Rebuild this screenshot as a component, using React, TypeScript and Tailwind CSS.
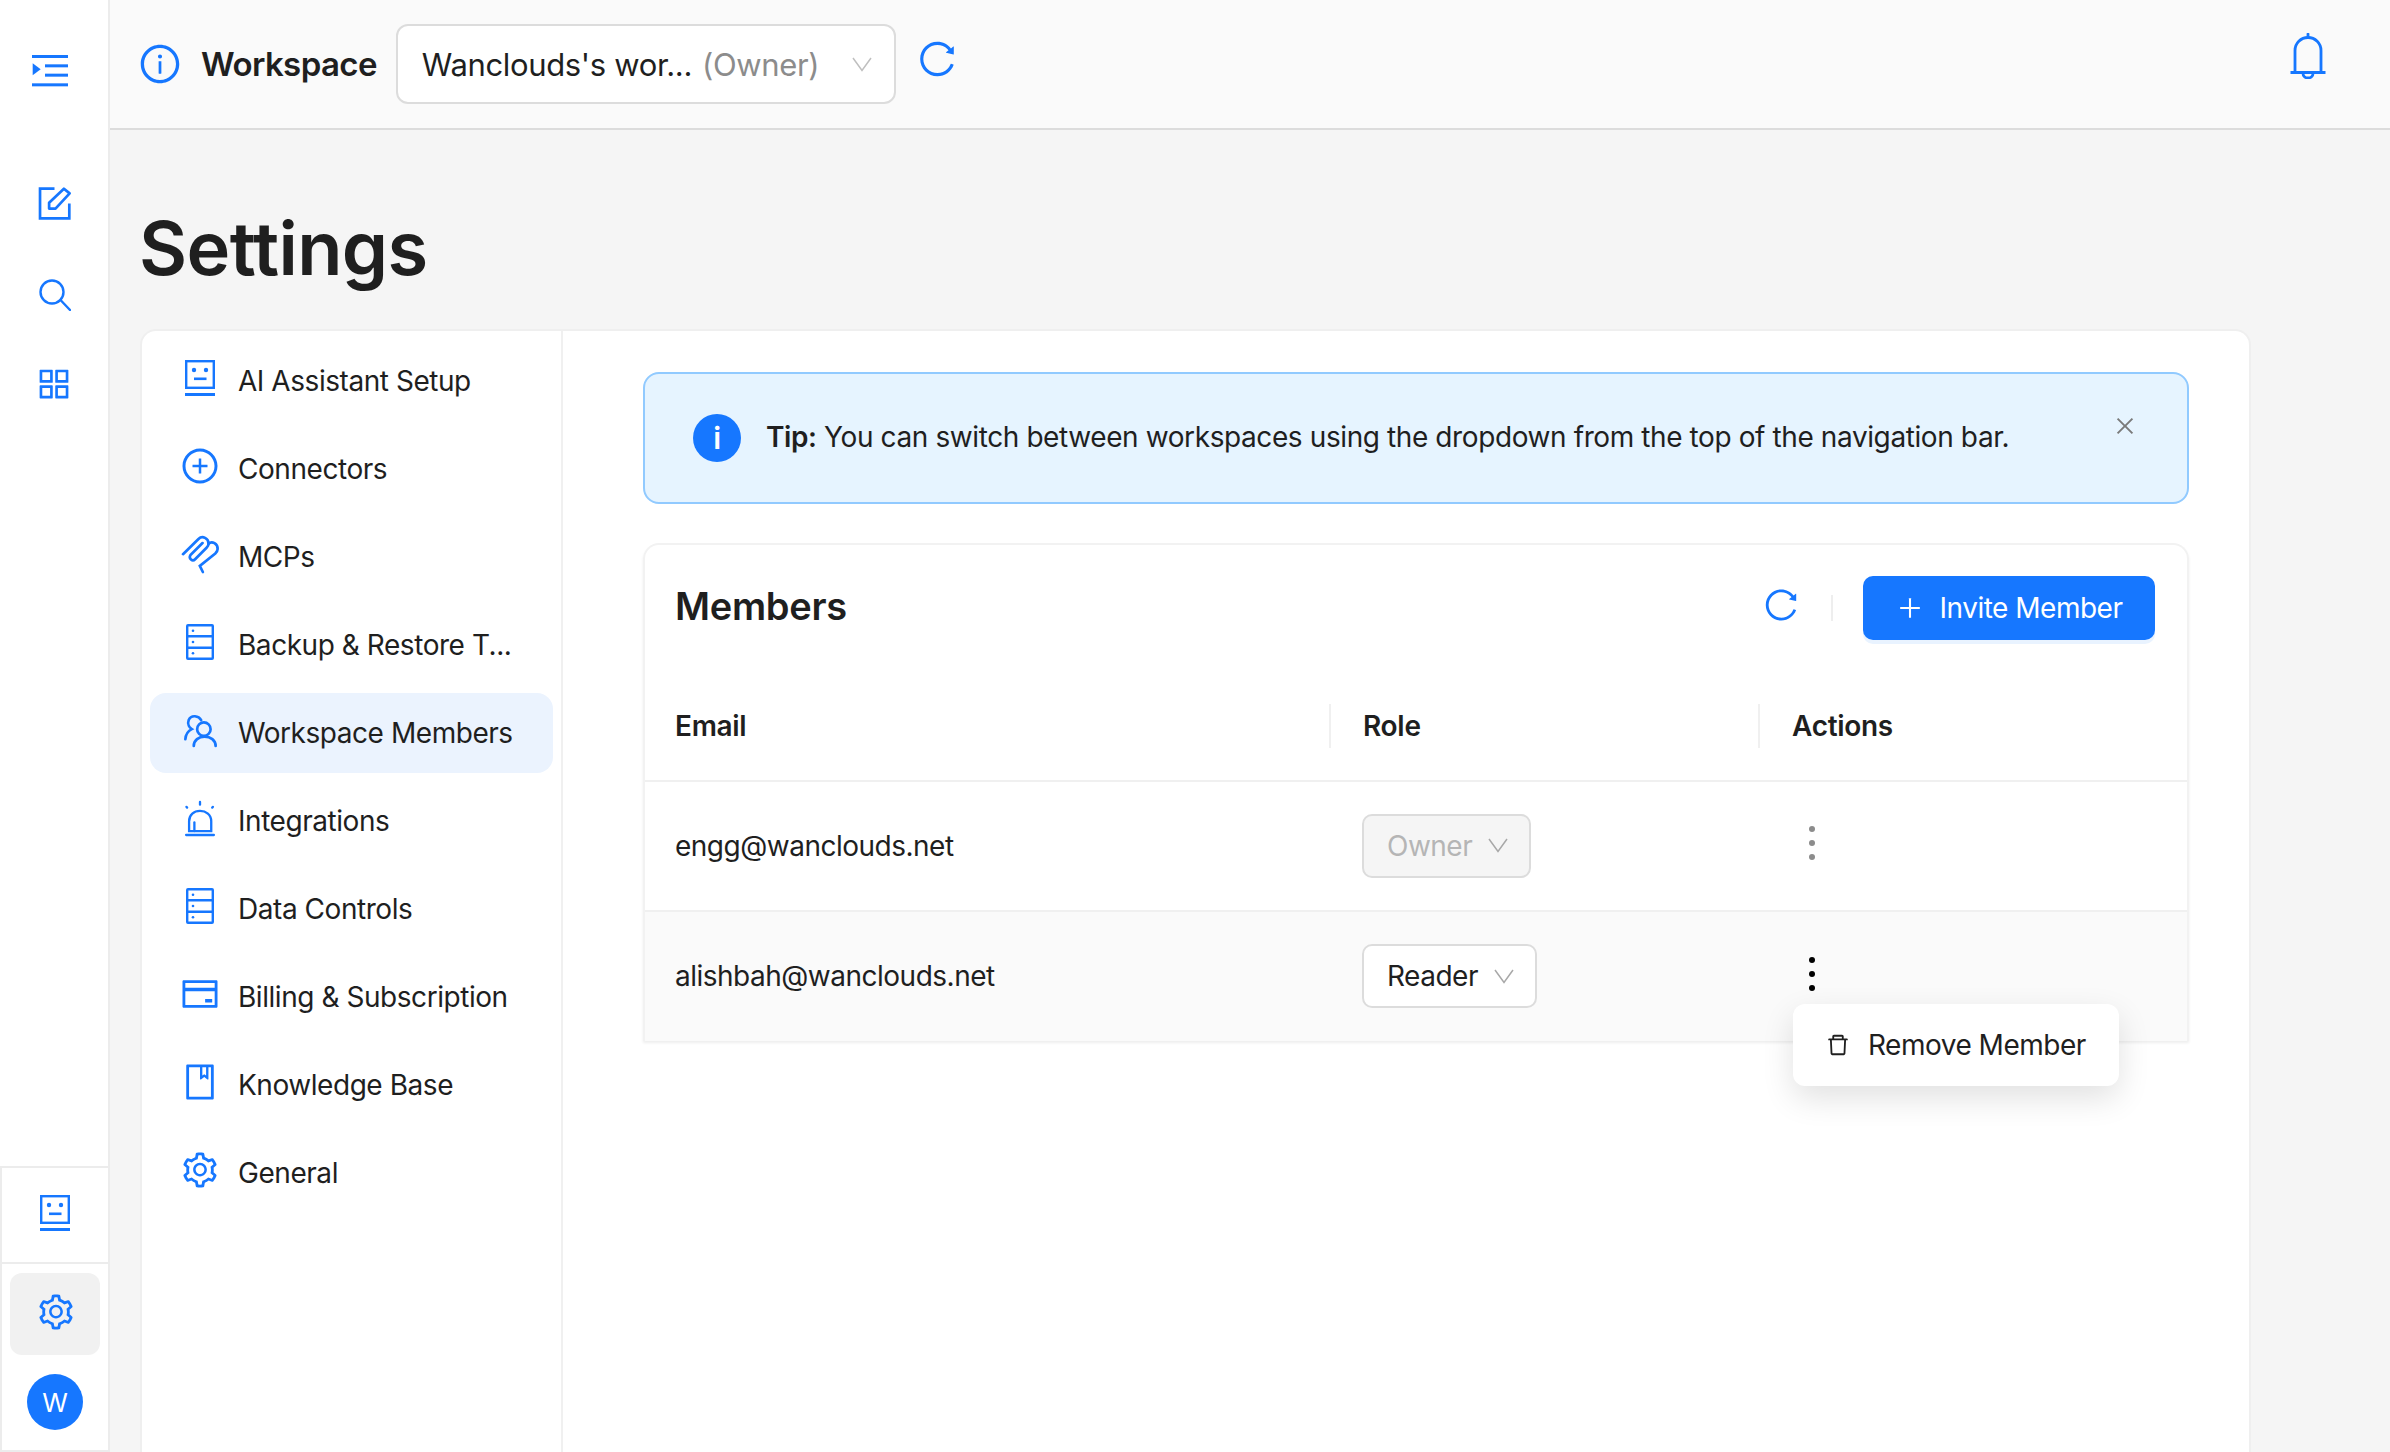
import React from 'react';
import {
  AiOutlineAppstore,
  AiOutlineBook,
  AiOutlineClose,
  AiOutlineCreditCard,
  AiOutlineDelete,
  AiOutlineInfoCircle,
  AiOutlinePlus,
  AiOutlinePlusCircle,
  AiOutlineReload,
  AiOutlineSetting,
} from 'react-icons/ai';

type IconProps = { className?: string };

const BotIcon: React.FC<IconProps> = ({ className }) => (
  <svg viewBox="0 0 30 36" fill="none" className={className}>
    <rect x="1.2" y="1.2" width="27.6" height="26.6" stroke="currentColor" strokeWidth="2.4" />
    <circle cx="9" cy="10" r="2.2" fill="currentColor" />
    <circle cx="21" cy="10" r="2.2" fill="currentColor" />
    <rect x="9" y="17.5" width="12.5" height="2.6" fill="currentColor" />
    <rect x="0" y="33" width="30" height="3" fill="currentColor" />
  </svg>
);

const MenuIcon: React.FC<IconProps> = ({ className }) => (
  <svg viewBox="0 0 108 96" fill="currentColor" className={className}>
    <rect x="0" y="0" width="108" height="9" />
    <rect x="39" y="28" width="69" height="9" />
    <rect x="39" y="56" width="69" height="9" />
    <rect x="0" y="85" width="108" height="9" />
    <path d="M2 25l24 18-24 18z" />
  </svg>
);

const EditIcon: React.FC<IconProps> = ({ className }) => (
  <svg viewBox="80 470 104 104" fill="none" stroke="currentColor" strokeWidth="8" className={className}>
    <path d="M132 478H89V566H176V522" />
    <path d="M116 520L160 478L177 492L135 537H116Z" strokeLinejoin="round" />
  </svg>
);

const SearchIcon: React.FC<IconProps> = ({ className }) => (
  <svg viewBox="0 0 32 32" fill="none" stroke="currentColor" strokeWidth="2.4" className={className}>
    <circle cx="13" cy="13" r="11.5" />
    <path d="M21.5 21l9.500 10" strokeLinecap="round" />
  </svg>
);

const BellIcon: React.FC<IconProps> = ({ className }) => (
  <svg viewBox="0 0 36 46" fill="none" stroke="currentColor" strokeWidth="2.8" className={className}>
    <path d="M5 39V17.500a13 13 0 0 1 26 0V39" />
    <path d="M18 1v3.500" strokeLinecap="round" />
    <path d="M0.500 39.500H35.500" />
    <path d="M13 40.500a5 4.500 0 0 0 10 0" />
  </svg>
);

const ClipIcon: React.FC<IconProps> = ({ className }) => (
  <svg viewBox="36 40 116 116" fill="none" stroke="currentColor" strokeWidth="8" strokeLinecap="round" className={className}>
    <path d="M42 97L88 52C100 40 118 50 118 66C118 72 115 75 112 78L78 112C70 120 58 110 64 100L100 64" />
    <path d="M118 66C128 56 146 66 145 82C145 88 142 91 138 95L92 132L101 150" />
  </svg>
);

const MembersIcon: React.FC<IconProps> = ({ className }) => (
  <svg viewBox="38 34 104 104" fill="none" stroke="currentColor" strokeWidth="8" strokeLinecap="round" className={className}>
    <circle cx="100" cy="82" r="20" />
    <path d="M70 132C70 115 85 104 102 104C120 104 135 115 135 132" />
    <path d="M92 55C85 42 62 38 55 55C50 68 58 78 64 82C52 88 46 98 45 112" />
  </svg>
);

const DatabaseIcon: React.FC<IconProps> = ({ className }) => (
  <svg viewBox="0 0 28 36" fill="none" stroke="currentColor" strokeWidth="2.4" className={className}>
    <rect x="1.200" y="1.200" width="25.600" height="33.600" rx="0.800" />
    <path d="M1 12.300H27M1 23.700H27" />
    <g fill="currentColor" stroke="none">
      <circle cx="7" cy="6.800" r="1.300" />
      <circle cx="7" cy="18" r="1.300" />
      <circle cx="7" cy="29.300" r="1.300" />
    </g>
  </svg>
);

const AlertIcon: React.FC<IconProps> = ({ className }) => (
  <svg viewBox="42 24 96 112" fill="none" stroke="currentColor" strokeWidth="7" strokeLinecap="round" className={className}>
    <path d="M57 118V88C57 68 72 57 90 57C108 57 124 68 124 88V118Z" />
    <path d="M73 92V118" />
    <path d="M48 130H132" />
    <path d="M90 30V38M49 45L51 47M129 45L127 47" />
  </svg>
);

const Chevron: React.FC<IconProps> = ({ className }) => (
  <svg viewBox="0 0 20 15" fill="none" stroke="currentColor" strokeWidth="1.500" className={className}>
    <path d="M1 1L10 13.500L19 1" />
  </svg>
);

const navItems: { label: string; Icon: React.ComponentType<IconProps>; size: string }[] = [
  { label: 'AI Assistant Setup', Icon: BotIcon, size: 'w-[30px] h-[36px]' },
  { label: 'Connectors', Icon: AiOutlinePlusCircle, size: 'w-[40px] h-[40px]' },
  { label: 'MCPs', Icon: ClipIcon, size: 'w-[39px] h-[39px]' },
  { label: 'Backup & Restore T...', Icon: DatabaseIcon, size: 'w-[28px] h-[36px]' },
  { label: 'Workspace Members', Icon: MembersIcon, size: 'w-[35px] h-[35px]' },
  { label: 'Integrations', Icon: AlertIcon, size: 'w-[32px] h-[37px]' },
  { label: 'Data Controls', Icon: DatabaseIcon, size: 'w-[28px] h-[36px]' },
  { label: 'Billing & Subscription', Icon: AiOutlineCreditCard, size: 'w-[40px] h-[40px]' },
  { label: 'Knowledge Base', Icon: AiOutlineBook, size: 'w-[40px] h-[40px]' },
  { label: 'General', Icon: AiOutlineSetting, size: 'w-[40px] h-[40px]' },
];

const RailIcons = () => (
  <aside className="w-[110px] shrink-0 bg-white border-r-2 border-[#ececec] flex flex-col">
    <div className="h-[128px] flex items-center justify-center text-[#1677ff] pr-[8px] pt-[14px]">
      <MenuIcon className="w-[36px] h-[32px]" />
    </div>
    <div className="flex flex-col items-center text-[#1677ff] pt-[58px] gap-[58px] flex-1">
      <EditIcon className="w-[35px] h-[35px]" />
      <SearchIcon className="w-[32px] h-[32px] ml-[2px]" />
      <AiOutlineAppstore className="w-[40px] h-[40px] -mt-[5px]" />
    </div>
    <div className="border-2 border-r-0 border-[#ececec] h-[286px] flex flex-col w-[108px]">
      <div className="h-[96px] flex items-center justify-center text-[#1677ff] border-b-2 border-[#ececec] pb-[4px]">
        <BotIcon className="w-[30px] h-[36px]" />
      </div>
      <div className="flex-1 flex flex-col items-center pt-[9px]">
        <div className="w-[90px] h-[82px] rounded-xl bg-[#f1f1f1] flex items-center justify-center text-[#1677ff] pb-[5px] pl-[2px]">
          <AiOutlineSetting className="w-[40px] h-[40px]" />
        </div>
        <div className="mt-[19px] w-[56px] h-[56px] rounded-full bg-[#1677ff] text-white text-[26px] flex items-center justify-center">
          W
        </div>
      </div>
    </div>
  </aside>
);

const TopBar = () => (
  <header className="h-[130px] shrink-0 bg-[#fafafa] border-b-2 border-[#dcdcdc] flex items-center pl-[28px] pr-[64px]">
    <AiOutlineInfoCircle className="w-[44px] h-[44px] text-[#1677ff]" />
    <span className="ml-[19px] text-[33px] font-semibold text-[#1f1f1f] tracking-[-0.6px] pt-[2px]">Workspace</span>
    <div className="ml-[19px] w-[500px] h-[80px] rounded-xl border-2 border-[#dcdcdc] bg-white flex items-center pl-[24px] pr-[22px]">
      <span className="text-[31px] text-[#1f1f1f] tracking-[-0.35px] pt-[2px]">Wanclouds's wor...</span>
      <span className="ml-[10px] text-[31px] text-[#8c8c8c] tracking-[-0.35px] pt-[2px]">(Owner)</span>
      <Chevron className="ml-auto w-[20px] h-[15px] text-[#bfbfbf]" />
    </div>
    <AiOutlineReload className="ml-[20px] w-[42px] h-[42px] text-[#1677ff] -mt-[10px]" />
    <BellIcon className="ml-auto w-[36px] h-[46px] text-[#1677ff] -mt-[16px]" />
  </header>
);

const RoleSelect = ({ label, disabled }: { label: string; disabled?: boolean }) => (
  <div
    className={`h-[64px] rounded-[10px] border-2 border-[#dcdcdc] flex items-center pl-[23px] pr-[21px] gap-[16px] text-[28px] tracking-[-0.5px] -mt-[1px] ${
      disabled ? 'bg-[#f5f5f5] text-[#b5b5b5]' : 'bg-white text-[#1f1f1f]'
    }`}
  >
    {label}
    <Chevron className="w-[20px] h-[15px] text-[#a8a8a8]" />
  </div>
);

const Dots = ({ dim }: { dim?: boolean }) => (
  <div className={`flex flex-col gap-[8px] ml-[19px] ${dim ? 'text-[#8c8c8c]' : 'text-black'}`}>
    <span className="w-[6px] h-[6px] rounded-full bg-current" />
    <span className="w-[6px] h-[6px] rounded-full bg-current" />
    <span className="w-[6px] h-[6px] rounded-full bg-current" />
  </div>
);

const MembersTable = () => (
  <section className="mt-[39px] rounded-t-2xl border-2 border-b-0 border-[#f2f2f2] shadow-[0_2px_3px_rgba(0,0,0,0.07)]">
    <div className="flex items-center h-[126px] pl-[30px] pr-[32px]">
      <h2 className="text-[38px] font-semibold text-[#1f1f1f] tracking-[-0.3px] -mt-[4px]">Members</h2>
      <AiOutlineReload className="ml-auto w-[38px] h-[38px] text-[#1677ff] -mt-[6px]" />
      <span className="ml-[31px] mr-[30px] w-[2px] h-[26px] bg-[#eeeeee]" />
      <button className="w-[292px] h-[64px] rounded-[10px] bg-[#1677ff] text-white text-[28px] tracking-[-0.5px] flex items-center justify-center gap-[16px] shadow-[0_4px_0_#e9f3ff]">
        <AiOutlinePlus className="w-[28px] h-[28px]" />
        Invite Member
      </button>
    </div>
    <div className="grid grid-cols-[684px_429px_1fr] items-center h-[111px] border-b-2 border-[#f0f0f0] text-[28px] font-semibold text-[#1f1f1f] tracking-[-0.3px]">
      <div className="pl-[30px]">Email</div>
      <div className="pl-[32px] border-l-2 border-[#f0f0f0] h-[44px] flex items-center">Role</div>
      <div className="pl-[32px] border-l-2 border-[#f0f0f0] h-[44px] flex items-center">Actions</div>
    </div>
    <div className="grid grid-cols-[684px_429px_1fr] items-center h-[130px] border-b-2 border-[#f0f0f0] text-[28px] text-[#1f1f1f] tracking-[-0.5px]">
      <div className="pl-[30px]">engg@wanclouds.net</div>
      <div className="pl-[33px] flex"><RoleSelect label="Owner" disabled /></div>
      <div className="pl-[32px] -mt-[6px]"><Dots dim /></div>
    </div>
    <div className="relative grid grid-cols-[684px_429px_1fr] items-center h-[129px] bg-[#fafafa] text-[28px] text-[#1f1f1f] tracking-[-0.5px]">
      <div className="pl-[30px] -mt-[1px]">alishbah@wanclouds.net</div>
      <div className="pl-[33px] flex"><RoleSelect label="Reader" /></div>
      <div className="pl-[32px] -mt-[6px]"><Dots /></div>
      <div className="absolute left-[1148px] top-[92px] w-[326px] h-[82px] rounded-xl bg-white shadow-[0_12px_32px_rgba(0,0,0,0.12)] flex items-center pl-[32px] gap-[17px]">
        <AiOutlineDelete className="w-[26px] h-[26px]" />
        Remove Member
      </div>
    </div>
  </section>
);

const App = () => (
  <div className="w-[2390px] h-[1452px] overflow-hidden flex bg-[#f5f5f5] font-['Inter',sans-serif]">
    <RailIcons />
    <div className="flex-1 flex flex-col min-w-0">
      <TopBar />
      <main className="flex-1 flex flex-col pl-[30px] pr-[139px]">
        <h1 className="mt-[65px] h-[106px] text-[74px] leading-[106px] font-semibold text-[#1f1f1f] tracking-[-0.6px] -ml-[1px]">Settings</h1>
        <div className="mt-[28px] flex-1 flex bg-white rounded-t-2xl border-2 border-b-0 border-[#efefef]">
          <nav className="w-[421px] shrink-0 border-r-2 border-[#f0f0f0] pl-[8px] pr-[8px] pt-[10px] flex flex-col gap-[8px]">
            {navItems.map(({ label, Icon, size }) => (
              <div
                key={label}
                className={`h-[80px] rounded-2xl flex items-center text-[28px] tracking-[-0.45px] text-[#1f1f1f] ${
                  label === 'Workspace Members' ? 'bg-[#ebf3fe]' : ''
                }`}
              >
                <span className="w-[88px] pl-[12px] flex items-center justify-center text-[#1677ff] shrink-0 mb-[6px]">
                  <Icon className={size} />
                </span>
                <span>{label}</span>
              </div>
            ))}
          </nav>
          <div className="flex-1 pl-[80px] pr-[60px] pt-[41px]">
            <div className="relative h-[132px] rounded-2xl border-2 border-[#91caff] bg-[#e6f4ff] flex items-center pl-[48px] text-[28px] tracking-[-0.4px] text-[#1f1f1f]">
              <span className="w-[48px] h-[48px] rounded-full bg-[#1677ff] text-white flex items-center justify-center font-semibold text-[30px]">i</span>
              <p className="ml-[25px] pb-[3px]"><span className="font-semibold">Tip:</span> You can switch between workspaces using the dropdown from the top of the navigation bar.</p>
              <AiOutlineClose className="absolute right-[50px] top-[40px] w-[24px] h-[24px] text-[#7a7a7a]" />
            </div>
            <MembersTable />
          </div>
        </div>
      </main>
    </div>
  </div>
);

export default App;
